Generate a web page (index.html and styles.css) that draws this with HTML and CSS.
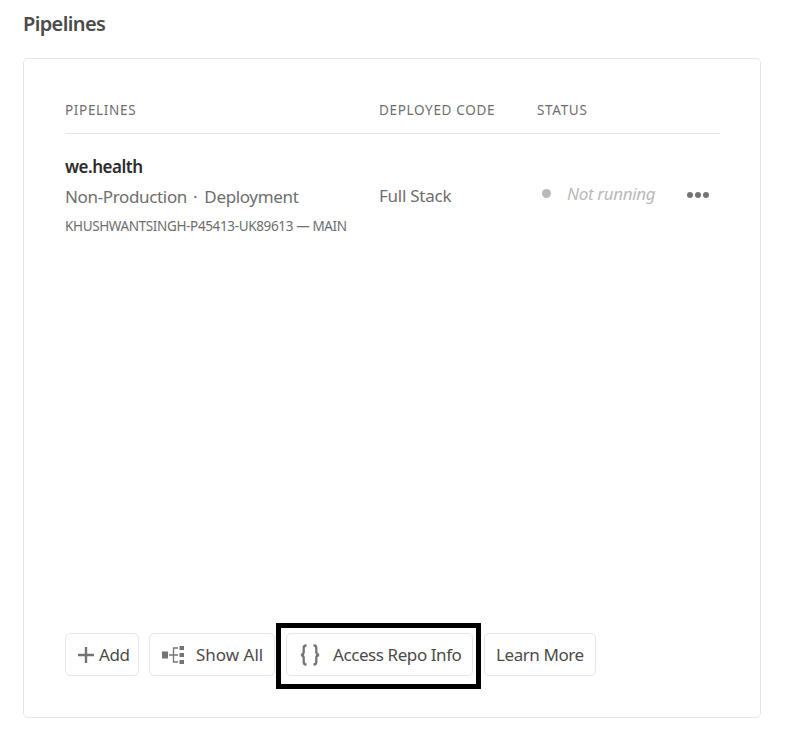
FILE: index.html
```html
<!DOCTYPE html>
<html lang="en">
<head>
<meta charset="utf-8">
<title>Pipelines</title>
<link rel="stylesheet" href="styles.css">
</head>
<body>
<h1 class="title">Pipelines</h1>
<section class="card">
  <div class="row head">
    <span>PIPELINES</span>
    <span>DEPLOYED CODE</span>
    <span>STATUS</span>
  </div>
  <div class="row item">
    <div class="pipeline">
      <div class="name">we.health</div>
      <div class="kind">Non-Production <span class="sep">·</span> Deployment</div>
      <div class="repo">KHUSHWANTSINGH-P45413-UK89613 — MAIN</div>
    </div>
    <div class="code">Full Stack</div>
    <div class="status"><i class="dot"></i><em>Not running</em></div>
    <svg class="more" width="22" height="6" viewBox="0 0 22 6"><circle cx="3" cy="3" r="3"/><circle cx="11" cy="3" r="3"/><circle cx="19" cy="3" r="3"/></svg>
  </div>
  <div class="actions">
    <button class="btn add"><svg width="16" height="16" viewBox="0 0 16 16"><path d="M6.800 0h2.400v6.800H16v2.400H9.200V16H6.800V9.200H0V6.800h6.800z"/></svg><span>Add</span></button>
    <button class="btn show"><svg width="22" height="18" viewBox="0 0 22 18"><path d="M0 5.500h6v7H0zM17.500 0h4.500v4h-4.500zM17.500 7h4.500v4h-4.500zM17.500 14h4.500v4h-4.500z"/><path class="line" d="M7 9h9M16 2h-4.500v14H16"/></svg><span>Show All</span></button>
    <div class="highlight"><button class="btn access"><svg width="20" height="22" viewBox="0 0 20 22"><path class="brace" d="M6.500 1.500H6C4.300 1.500 3.700 2.400 3.700 4v4c0 1.800-.7 2.700-2.700 3 2 .3 2.700 1.200 2.700 3v4c0 1.600.6 2.500 2.300 2.500h.5M13.500 1.500h.5c1.700 0 2.300.9 2.300 2.500v4c0 1.800.7 2.700 2.700 3-2 .3-2.700 1.200-2.700 3v4c0 1.600-.6 2.500-2.300 2.500h-.5"/></svg><span>Access Repo Info</span></button></div>
    <button class="btn learn"><span>Learn More</span></button>
  </div>
</section>
</body>
</html>
```
FILE: styles.css
```css
* { box-sizing: border-box; }
body { margin: 0; padding: 10px 28px 0 23px; background: #fff; font-family: "Noto Sans", sans-serif; color: #6e6e6e; white-space: nowrap; }
.title { margin: 0 0 20px; height: 28px; font-size: 20px; line-height: 28px; font-weight: 600; letter-spacing: -0.620px; color: #4b4b4b; }
.card { display: flex; flex-direction: column; height: 660px; padding: 41px 40px 28px 41px; border: 1px solid #e6e6e6; border-radius: 5px; }
.row { display: grid; grid-template-columns: 314px 158px 150px 1fr; }
.head { height: 34px; border-bottom: 1px solid #e6e6e6; font-size: 13.500px; line-height: 20px; letter-spacing: 0.670px; }
.item { padding-top: 20px; font-size: 17px; }
.name { height: 26px; line-height: 26px; font-weight: 600; color: #2c2c2c; letter-spacing: -0.5px; }
.kind { height: 34px; line-height: 34px; letter-spacing: -0.350px; }
.sep { margin: 0 3px 0 2px; }
.repo { height: 25px; line-height: 25px; font-size: 13.500px; letter-spacing: -0.360px; }
.code { padding-top: 29px; line-height: 26px; letter-spacing: -0.250px; }
.status { display: flex; align-items: center; height: 26px; margin-top: 26px; padding-left: 5px; color: #b9b9b9; letter-spacing: -0.350px; }
.dot { width: 9px; height: 9px; margin-right: 16px; border-radius: 50%; background: #b9b9b9; }
.more { margin-top: 38px; fill: #747474; }
.actions { display: flex; align-items: flex-start; height: 66px; margin-top: auto; }
.btn { display: flex; align-items: center; height: 43px; margin-top: 10px; padding: 0 12px; border: 1px solid #e6e6e6; border-radius: 5px; background: #fff; color: #4b4b4b; font: 17px "Noto Sans", sans-serif; letter-spacing: -0.420px; }
.btn svg { fill: #747474; flex: none; }
.add { width: 74px; margin-right: 10px; gap: 5px; }
.show { width: 126px; margin-right: 1px; gap: 12px; letter-spacing: 0; }
.highlight { width: 205px; height: 66px; padding: 5px; border: 5px solid #000; }
.access { width: 187px; gap: 13px; padding-left: 13px; margin-top: 0; }
.learn { width: 112px; margin-left: 3px; padding: 0 11px; }
.line { fill: none; stroke: #747474; stroke-width: 1.300; }
.brace { fill: none; stroke: #747474; stroke-width: 2.300; }
```
